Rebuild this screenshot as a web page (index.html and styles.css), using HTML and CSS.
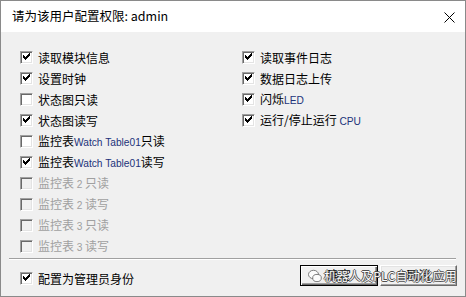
FILE: index.html
```html
<!DOCTYPE html>
<html lang="zh">
<head>
<meta charset="utf-8">
<title>权限</title>
<link rel="stylesheet" href="styles.css">
</head>
<body>
<div class="window">
  <div class="titlebar">
    <span class="title">请为该用户配置权限: admin</span>
    <svg class="close" width="11" height="11" viewBox="0 0 11 11"><path d="M0.5 0.5 L10.5 10.5 M10.5 0.5 L0.5 10.5" stroke="#000" stroke-width="1" fill="none"/></svg>
  </div>
  <div class="body">
    <div class="cols">
      <div class="col">
        <div class="row"><span class="cb on"></span><span>读取模块信息</span></div>
        <div class="row"><span class="cb on"></span><span>设置时钟</span></div>
        <div class="row"><span class="cb"></span><span>状态图只读</span></div>
        <div class="row"><span class="cb on"></span><span>状态图读写</span></div>
        <div class="row"><span class="cb"></span><span>监控表<span class="lat">Watch Table01</span>只读</span></div>
        <div class="row"><span class="cb on"></span><span>监控表<span class="lat">Watch Table01</span>读写</span></div>
        <div class="row dis"><span class="cb"></span><span>监控表 <span class="lat">2</span> 只读</span></div>
        <div class="row dis"><span class="cb"></span><span>监控表 <span class="lat">2</span> 读写</span></div>
        <div class="row dis"><span class="cb"></span><span>监控表 <span class="lat">3</span> 只读</span></div>
        <div class="row dis"><span class="cb"></span><span>监控表 <span class="lat">3</span> 读写</span></div>
      </div>
      <div class="col">
        <div class="row"><span class="cb on"></span><span>读取事件日志</span></div>
        <div class="row"><span class="cb on"></span><span>数据日志上传</span></div>
        <div class="row"><span class="cb on"></span><span>闪烁<span class="lat">LED</span></span></div>
        <div class="row"><span class="cb on"></span><span>运行/停止运行 <span class="lat">CPU</span></span></div>
      </div>
    </div>
    <div class="sep"></div>
    <div class="footer">
      <div class="row admin"><span class="cb on"></span><span>配置为管理员身份</span></div>
      <div class="buttons">
        <div class="btn default">确定</div>
        <div class="btn">取消</div>
      </div>
    </div>
  </div>
  <div class="watermark">
    <svg class="wm-icon" width="14" height="14" viewBox="0 0 14 14"><ellipse cx="5.5" cy="5.5" rx="5" ry="4.2" fill="#fff" stroke="#555" stroke-width="0.8"/><ellipse cx="9" cy="9" rx="4.3" ry="3.6" fill="#fff" stroke="#555" stroke-width="0.8"/></svg>
    <span class="wm-text">机器人及PLC自动化应用</span>
  </div>
</div>
</body>
</html>
```
FILE: styles.css
```css
html, body {
  margin: 0;
  padding: 0;
  background: #f0f0f0;
}
body {
  font-family: "Noto Sans CJK SC", "Liberation Sans", sans-serif;
  font-size: 12px;
  color: #000;
}
.window {
  position: relative;
  width: 466px;
  height: 297px;
  box-sizing: border-box;
  border: 1px solid #8a8a8a;
  background: #f0f0f0;
  display: flex;
  flex-direction: column;
}
.titlebar {
  height: 31px;
  background: #fff;
  display: flex;
  align-items: center;
  justify-content: space-between;
  padding: 0 10px 0 11px;
  flex-shrink: 0;
}
.title {
  font-size: 12.5px;
  line-height: 16px;
  padding-bottom: 1px;
}
.close {
  display: block;
  margin-top: 2px;
}
.body {
  flex: 1;
  display: flex;
  flex-direction: column;
}
.cols {
  display: grid;
  grid-template-columns: 222px 1fr;
  padding: 15px 0 0 19px;
  height: 210px;
}
.row {
  display: flex;
  align-items: center;
  gap: 5px;
  height: 21px;
  line-height: 21px;
  white-space: nowrap;
}
.row.dis {
  color: #a0a0a0;
}
.lat {
  font-family: "Liberation Sans", sans-serif;
  font-size: 10.2px;
  color: #22337a;
}
.row.dis .lat {
  color: #a0a0a0;
}
.cb {
  width: 13px;
  height: 13px;
  box-sizing: border-box;
  flex-shrink: 0;
  background: #fff;
  border: 1px solid;
  border-color: #a0a0a0 #fff #fff #a0a0a0;
  box-shadow: inset 1px 1px 0 #696969, inset -1px -1px 0 #e3e3e3;
  position: relative;
}
.row.dis .cb {
  background: #f0f0f0;
}
.cb.on::after {
  content: "";
  position: absolute;
  left: 2px;
  top: 1px;
  width: 7px;
  height: 7px;
  background: url("data:image/svg+xml;utf8,<svg xmlns='http://www.w3.org/2000/svg' width='7' height='7' viewBox='0 0 7 7'><path d='M0 2h1v1h1v1h1v-1h1v-1h1v-1h1v-1h1v3h-1v1h-1v1h-1v1h-1v1h-1v-1h-1v-1h-1z' fill='black'/></svg>") no-repeat;
}
.sep {
  height: 0;
  border-top: 1px solid #a0a0a0;
  border-bottom: 1px solid #fff;
  margin: 1px 9px 0 8px;
}
.footer {
  display: flex;
  justify-content: space-between;
  align-items: flex-start;
  padding: 0 8px 0 19px;
}
.row.admin {
  margin-top: 8px;
}
.buttons {
  display: flex;
  gap: 2px;
  margin-top: 5px;
}
.btn {
  width: 77px;
  height: 21px;
  box-sizing: border-box;
  background: #f0f0f0;
  border: 1px solid;
  border-color: #fff #696969 #696969 #fff;
  box-shadow: inset -1px -1px 0 #a0a0a0, inset 1px 1px 0 #e3e3e3;
  text-align: center;
  line-height: 18px;
}
.btn.default {
  width: 78px;
  border-color: #000;
  box-shadow: inset 1px 1px 0 #fff, inset -1px -1px 0 #696969, inset -2px -2px 0 #a0a0a0;
}
.watermark {
  position: absolute;
  left: 307px;
  top: 266px;
  display: flex;
  align-items: center;
  gap: 2px;
  opacity: 0.92;
}
.wm-icon {
  display: block;
}
.wm-text {
  color: #fff;
  font-size: 12px;
  line-height: 18px;
  text-shadow: 1px 0 0 #444, -1px 0 0 #444, 0 1px 0 #444, 0 -1px 0 #444;
  letter-spacing: 0.3px;
}
```
